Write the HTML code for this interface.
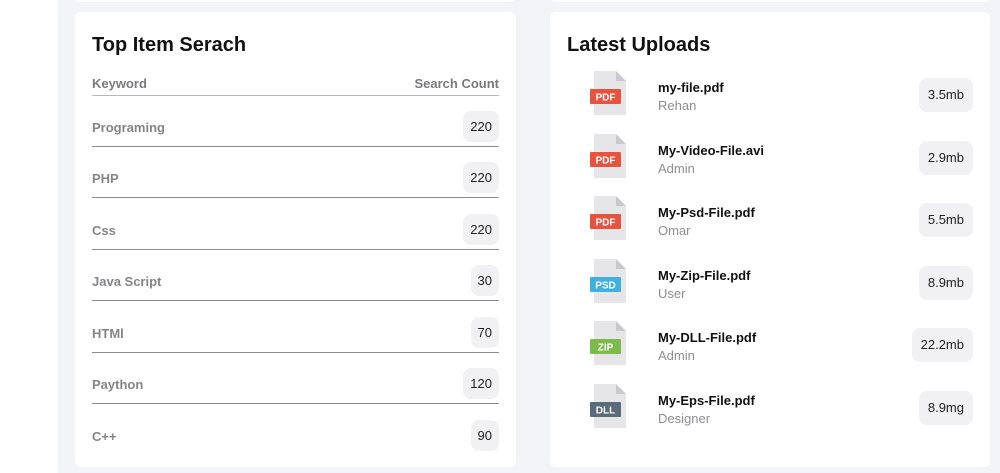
<!DOCTYPE html><html><head><style>
body{margin:0;width:1000px;height:473px;background:#f3f4f8;font-family:"Liberation Sans",sans-serif;position:relative;overflow:hidden}
.side{position:absolute;left:0;top:0;width:58px;height:473px;background:#fff}
.card{position:absolute;background:#fff;border-radius:6px}
h2{position:absolute;margin:0;font-size:20px;font-weight:bold;color:#111}
.hd{position:absolute;left:17px;right:17px;top:62px;height:21px;border-bottom:1.5px solid #b8b8bc;font-size:13px;font-weight:bold;color:#7a7a7e}
.row{position:absolute;left:17px;right:17px;height:51px;border-bottom:1.3px solid #8c8c90;font-size:13px;font-weight:bold;color:#858589}
.row span.k{position:absolute;left:0;top:25px}
.b{position:absolute;right:0;top:16px;height:31px;line-height:31px;padding:0 7px;background:#f1f0f2;border-radius:8px;font-size:13px;color:#222;font-weight:normal}
.it{position:absolute;left:0;right:0;height:60px}
.ic{position:absolute;left:40px;top:6px;width:36px;height:44px}
.nm{position:absolute;left:108px;top:15px;font-size:13px;font-weight:bold;color:#111}
.us{position:absolute;left:108px;top:33px;font-size:13px;color:#8e8e92}
.sz{position:absolute;right:17px;top:13px;height:34px;line-height:34px;padding:0 9px;background:#f1f0f2;border-radius:8px;font-size:13px;color:#222}
</style></head><body>
<div class="side"></div>
<div class="card" style="left:75px;top:-10px;width:441px;height:12px"></div>
<div class="card" style="left:550px;top:-10px;width:440px;height:12px"></div>
<div class="card" style="left:75px;top:12px;width:441px;height:455px">
<h2 style="left:17px;top:22px">Top Item Serach</h2>
<div class="hd"><span style="position:absolute;left:0;top:2px">Keyword</span><span style="position:absolute;right:0;top:2px">Search Count</span></div>
<div class="row" style="top:83px"><span class="k">Programing</span><span class="b">220</span></div>
<div class="row" style="top:134px"><span class="k">PHP</span><span class="b">220</span></div>
<div class="row" style="top:186px"><span class="k">Css</span><span class="b">220</span></div>
<div class="row" style="top:237px"><span class="k">Java Script</span><span class="b">30</span></div>
<div class="row" style="top:289px"><span class="k">HTMl</span><span class="b">70</span></div>
<div class="row" style="top:340px"><span class="k">Paython</span><span class="b">120</span></div>
<div class="row" style="top:392px;border:none"><span class="k">C++</span><span class="b">90</span></div>
</div>
<div class="card" style="left:550px;top:12px;width:440px;height:455px">
<h2 style="left:17px;top:22px">Latest Uploads</h2>
<div id="list"></div>
</div>
<script>
var d=[["my-file.pdf","Rehan","3.5mb","PDF","#e8533f"],["My-Video-File.avi","Admin","2.9mb","PDF","#e8533f"],["My-Psd-File.pdf","Omar","5.5mb","PDF","#e8533f"],["My-Zip-File.pdf","User","8.9mb","PSD","#3fb0e0"],["My-DLL-File.pdf","Admin","22.2mb","ZIP","#7cbb49"],["My-Eps-File.pdf","Designer","8.9mg","DLL","#5a6b7b"]];
var h="";d.forEach(function(r,i){h+='<div class="it" style="top:'+(53+i*62.5)+'px"><svg class="ic" viewBox="0 0 36 44"><path d="M4 0H26L36 10V44H4Z" fill="#e6e6e8"/><path d="M26 0V10H36Z" fill="#c9c9cc"/><rect x="0" y="18" width="31" height="15" rx="1" fill="'+r[4]+'"/><text x="15.5" y="29.5" font-size="10" font-weight="bold" fill="#fff" text-anchor="middle" font-family="Liberation Sans">'+r[3]+'</text></svg><div class="nm">'+r[0]+'</div><div class="us">'+r[1]+'</div><div class="sz">'+r[2]+'</div></div>'});
document.getElementById("list").innerHTML=h;
</script>
</body></html>
